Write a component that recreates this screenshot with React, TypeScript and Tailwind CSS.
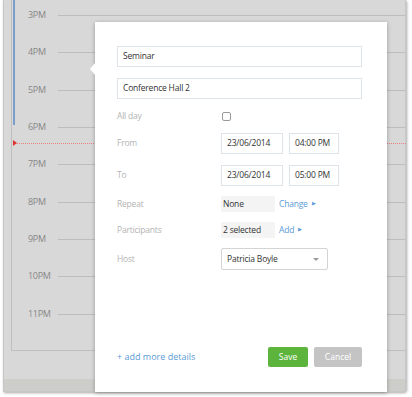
import React from "react";

const HOURS = ["3PM", "4PM", "5PM", "6PM", "7PM", "8PM", "9PM", "10PM", "11PM"];

function HourRow({ label }: { label: string }) {
  return (
    <div className="flex h-[37.33px] items-start">
      <span className="h-[12px] w-[46px] shrink-0 pl-[16px] text-[9px] leading-[12px] tracking-[-0.3px] text-[#878787]">
        {label}
      </span>
      <div className="mt-[6px] h-px flex-1 bg-[#bdbdbd]" />
    </div>
  );
}

function TextBox({ value, className }: { value: string; className: string }) {
  return (
    <div
      className={`flex h-[21px] items-center whitespace-nowrap border border-[#dde3ea] bg-white px-[5px] text-[8.5px] tracking-[-0.2px] text-[#333] ${className}`}
    >
      {value}
    </div>
  );
}

function FieldRow({
  label,
  className,
  children,
}: {
  label: string;
  className: string;
  children?: React.ReactNode;
}) {
  return (
    <div className={`flex items-center ${className}`}>
      <span className="w-[104px] shrink-0 text-[8.5px] tracking-[-0.2px] text-[#b3b3b3]">{label}</span>
      {children}
    </div>
  );
}

function Caret() {
  return <span className="ml-[4px] text-[5px] text-[#5b9bd5]">▶</span>;
}

export default function App() {
  return (
    <div
      className="relative h-[397px] w-[412px] overflow-hidden bg-white"
      style={{ fontFamily: '"Open Sans", "Liberation Sans", sans-serif' }}
    >
      {/* 窗口 */}
      <div className="ml-[3px] flex h-[392px] w-[403px] flex-col rounded-br-[3px] border border-t-0 border-[#c7c7c7] bg-[#d8d8d8] shadow-[1px_1px_3px_rgba(0,0,0,0.35)]">
        <div className="ml-[7px] h-[351px] border-b border-l border-[#bfbfbf] pt-[9px]">
          {HOURS.map((h) => (
            <HourRow key={h} label={h} />
          ))}
        </div>
        <div className="flex-1" />
        <div className="h-[12px] bg-[#cdcdc9]" />
      </div>

      {/* 当前事件条 */}
      <div className="absolute left-[13px] top-0 h-[125px] w-[2px] bg-[#7b9ec8]" />

      {/* 当前时间线 */}
      <div className="absolute left-[13px] top-[140px] flex w-[393px] items-center">
        <span className="h-0 w-0 border-y-[3px] border-l-[4px] border-y-transparent border-l-[#e0302e]" />
        <div className="flex-1 border-t border-dotted border-[#e88080]" />
      </div>

      {/* 弹窗 */}
      <div className="absolute left-[95px] top-[22px] h-[370px] w-[292px] bg-white pl-[22px] pr-[25px] pt-[24px] shadow-[0_1px_4px_rgba(0,0,0,0.3)]">
        <span className="absolute left-[-5px] top-[41px] h-0 w-0 border-y-[6px] border-r-[5px] border-y-transparent border-r-white" />

        <TextBox value="Seminar" className="w-full" />
        <TextBox value="Conference Hall 2" className="mt-[11px] w-full" />

        <FieldRow label="All day" className="mt-[10px] h-[14px]">
          <span className="ml-[1px] h-[9px] w-[9px] rounded-[2px] border border-[#9a9a9a] bg-white" />
        </FieldRow>

        <FieldRow label="From" className="mt-[10px] h-[21px]">
          <TextBox value="23/06/2014" className="w-[62px]" />
          <TextBox value="04:00 PM" className="ml-[6px] w-[50px]" />
        </FieldRow>

        <FieldRow label="To" className="mt-[11px] h-[21px]">
          <TextBox value="23/06/2014" className="w-[62px]" />
          <TextBox value="05:00 PM" className="ml-[6px] w-[50px]" />
        </FieldRow>

        <FieldRow label="Repeat" className="mt-[10px] h-[16px]">
          <span className="flex h-[16px] w-[54px] items-center bg-[#f4f4f4] pl-[2px] text-[8.5px] tracking-[-0.2px] text-[#333]">
            None
          </span>
          <span className="ml-[4px] text-[8.5px] tracking-[-0.2px] text-[#5b9bd5]">Change</span>
          <Caret />
        </FieldRow>

        <FieldRow label="Participants" className="mt-[10px] h-[16px]">
          <span className="flex h-[16px] w-[54px] items-center whitespace-nowrap bg-[#f4f4f4] pl-[2px] text-[8.5px] tracking-[-0.2px] text-[#333]">
            2 selected
          </span>
          <span className="ml-[4px] text-[8.5px] tracking-[-0.2px] text-[#5b9bd5]">Add</span>
          <Caret />
        </FieldRow>

        <FieldRow label="Host" className="mt-[10px] h-[22px]">
          <div className="flex h-[22px] w-[107px] items-center justify-between rounded-[2px] border border-[#d4d4d4] bg-white pl-[5px] pr-[8px] text-[8.5px] tracking-[-0.2px] text-[#333]">
            Patricia Boyle
            <span className="h-0 w-0 border-x-[3px] border-t-[3px] border-x-transparent border-t-[#9a9a9a]" />
          </div>
        </FieldRow>

        <div className="mt-[77px] flex items-center">
          <span className="flex-1 text-[9px] text-[#5b9bd5]">+ add more details</span>
          <button className="h-[20px] w-[40px] rounded-[2px] bg-[#5db43c] text-[8.5px] text-white">
            Save
          </button>
          <button className="ml-[6px] h-[20px] w-[48px] rounded-[2px] bg-[#c4c4c4] text-[8.5px] text-white">
            Cancel
          </button>
        </div>
      </div>
    </div>
  );
}
